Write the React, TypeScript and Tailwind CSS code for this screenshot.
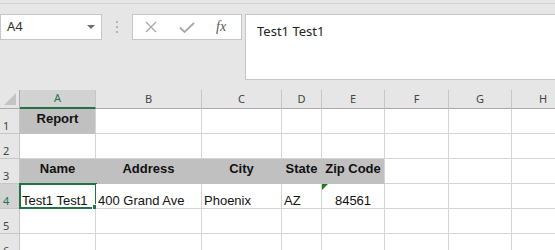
import React from 'react';

const COLS = ['A', 'B', 'C', 'D', 'E', 'F', 'G', 'H'];

type Cell = { text?: string; bold?: boolean; fill?: boolean; align?: 'left' | 'center'; top?: boolean };

// rows 1..7 of the visible sheet, keyed by column index
const ROWS: Record<number, Record<number, Cell>> = {
  1: { 0: { text: 'Report', bold: true, fill: true, align: 'center', top: true } },
  2: {},
  3: {
    0: { text: 'Name', bold: true, fill: true, align: 'center', top: true },
    1: { text: 'Address', bold: true, fill: true, align: 'center', top: true },
    2: { text: 'City', bold: true, fill: true, align: 'center', top: true },
    3: { text: 'State', bold: true, fill: true, align: 'center', top: true },
    4: { text: 'Zip Code', bold: true, fill: true, align: 'center', top: true },
  },
  4: {
    0: { text: 'Test1 Test1' },
    1: { text: '400 Grand Ave' },
    2: { text: 'Phoenix' },
    3: { text: 'AZ' },
    4: { text: '84561', align: 'center' },
  },
  5: {},
  6: {},
};

function FormulaBar() {
  return (
    <div className="bg-[#e6e6e6] h-[90px] flex flex-col">
      <div className="h-[4px] border-b border-[#d2d2d2]" />
      <div className="flex items-start mt-[10px]">
        {/* name box */}
        <div className="w-[102px] h-[26px] bg-white border border-[#c6c6c6] flex items-center justify-between pl-[6px] pr-[6px]">
          <span className="text-[13px] text-[#333] font-['Noto_Sans',sans-serif]">A4</span>
          <svg width="8" height="4" viewBox="0 0 8 4">
            <polygon points="0,0 8,0 4,4" fill="#6f6f6f" />
          </svg>
        </div>
        <div className="w-[30px] h-[26px] flex flex-col items-center justify-center gap-[3px]">
          <span className="w-[2px] h-[2px] bg-[#b5b5b5]" />
          <span className="w-[2px] h-[2px] bg-[#b5b5b5]" />
          <span className="w-[2px] h-[2px] bg-[#b5b5b5]" />
        </div>
        {/* cancel / enter / fx */}
        <div className="w-[110px] h-[26px] bg-white border border-[#c6c6c6] flex items-center">
          <svg className="ml-[12px]" width="12" height="12" viewBox="0 0 12 12">
            <path d="M1 1 L11 11 M11 1 L1 11" stroke="#a9a9a9" strokeWidth="1.3" />
          </svg>
          <svg className="ml-[22px]" width="16" height="11" viewBox="0 0 16 11">
            <path d="M1 5.5 L5.5 10 L15 1" stroke="#a9a9a9" strokeWidth="1.8" fill="none" />
          </svg>
          <span className="ml-[21px] text-[14px] italic text-[#5a5a5a] font-['Liberation_Serif',serif] leading-none">fx</span>
        </div>
        <div className="ml-[3px] flex-1 h-[66px] bg-white border-y border-l border-[#c6c6c6] pl-[11px] pt-[3px]">
          <span className="text-[13px] leading-[18px] text-[#222] font-['Noto_Sans',sans-serif]">Test1 Test1</span>
        </div>
      </div>
    </div>
  );
}

export default function App() {
  return (
    <div className="w-[555px] h-[250px] overflow-hidden bg-white">
      <FormulaBar />
      <div className="grid grid-cols-[20px_76px_106px_80px_40px_63px_64px_63px_63px] grid-rows-[19px_repeat(6,25px)] font-['Noto_Sans',sans-serif]">
        {/* corner */}
        <div className="bg-[#e6e6e6] border-r border-b border-[#ababab] flex items-end justify-end pr-[3px] pb-[3px]">
          <svg width="12" height="12" viewBox="0 0 12 12">
            <polygon points="12,0 12,12 0,12" fill="#c4c4c4" />
          </svg>
        </div>
        {COLS.map((c) =>
          c === 'A' ? (
            <div key={c} className="bg-[#d2d2d2] border-r border-[#c6c6c6] border-b-2 border-b-[#217346] flex items-center justify-center text-[11px] text-[#217346]">
              {c}
            </div>
          ) : (
            <div key={c} className="bg-[#e6e6e6] border-r border-[#c6c6c6] border-b border-b-[#ababab] flex items-center justify-center text-[11px] text-[#444]">
              {c}
            </div>
          )
        )}
        {[1, 2, 3, 4, 5, 6].map((r) => (
          <React.Fragment key={r}>
            <div
              className={`border-r border-b border-[#c6c6c6] flex items-end pl-[3px] text-[11px] leading-[14px] ${
                r === 4 ? 'bg-[#d2d2d2] text-[#217346]' : 'bg-[#e6e6e6] text-[#444]'
              }`}
            >
              {r}
            </div>
            {COLS.map((c, ci) => {
              const cell = ROWS[r][ci];
              const fill = cell?.fill;
              const nextFill = ROWS[r][ci + 1]?.fill;
              return (
                <div
                  key={c}
                  className={`relative flex border-b font-['Liberation_Sans',Arial,sans-serif] text-[13px] leading-[15px] text-[#111] whitespace-nowrap ${
                    fill ? 'bg-[#c0c0c0] border-b-[#c0c0c0]' : 'bg-white border-b-[#d4d4d4]'
                  } ${fill && nextFill ? 'border-r border-r-[#c0c0c0]' : 'border-r border-r-[#d4d4d4]'} ${
                    cell?.top ? 'items-start pt-[2px]' : 'items-end'
                  } ${cell?.align === 'center' ? 'justify-center' : 'justify-start pl-[2px]'} ${cell?.bold ? 'font-bold' : ''}`}
                >
                  {cell?.text}
                  {r === 4 && ci === 0 && (
                    <div className="absolute -left-[1px] -top-[1px] w-[78px] h-[26px] border-2 border-[#217346]">
                      <div className="absolute -right-[4px] -bottom-[4px] w-[7px] h-[7px] bg-[#217346] border border-white" />
                    </div>
                  )}
                  {r === 4 && ci === 4 && (
                    <svg className="absolute left-0 top-0" width="6" height="6" viewBox="0 0 6 6">
                      <polygon points="0,0 6,0 0,6" fill="#1e7b1e" />
                    </svg>
                  )}
                </div>
              );
            })}
          </React.Fragment>
        ))}
      </div>
    </div>
  );
}
